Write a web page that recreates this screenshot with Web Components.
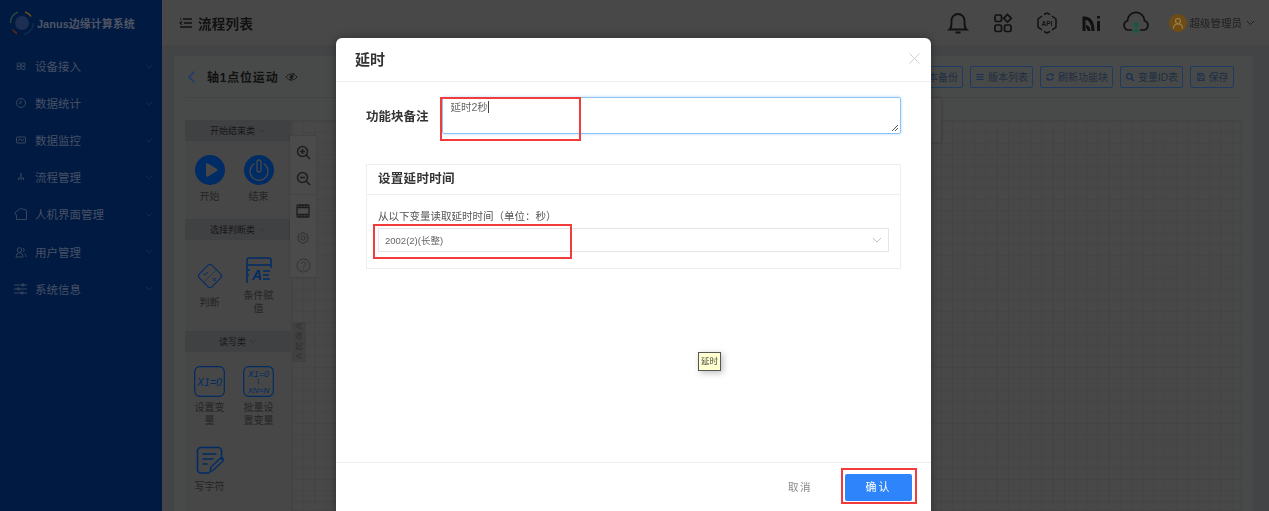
<!DOCTYPE html>
<html lang="zh">
<head>
<meta charset="utf-8">
<title>流程列表</title>
<style>
    html, body { margin: 0; height: 511px; overflow: hidden; background: #434445; }
    body { font-family: "Liberation Sans", "Noto Sans CJK SC", sans-serif; position: relative; }
    app-shell { filter: blur(.4px); }
</style>
</head>
<body>
<app-shell>
    <app-sidebar slot="side">
        <nav-item icon="device">设备接入</nav-item>
        <nav-item icon="clock">数据统计</nav-item>
        <nav-item icon="monitor">数据监控</nav-item>
        <nav-item icon="flow">流程管理</nav-item>
        <nav-item icon="home">人机界面管理</nav-item>
        <nav-item icon="user">用户管理</nav-item>
        <nav-item icon="sliders">系统信息</nav-item>
    </app-sidebar>
    <app-header slot="top"></app-header>
    <flow-page slot="main">
        <tool-button icon="none">本备份</tool-button>
        <tool-button icon="list">版本列表</tool-button>
        <tool-button icon="refresh">刷新功能块</tool-button>
        <tool-button icon="search">变量ID表</tool-button>
        <tool-button icon="save" style="min-width:44px">保存</tool-button>
    </flow-page>
</app-shell>
<delay-dialog></delay-dialog>
<script>
const ICONS = {
    device: '<rect x="3" y="4" width="3.5" height="3" rx="1"/><rect x="7.5" y="4" width="3.5" height="3" rx="1"/><rect x="3" y="7.5" width="3.5" height="3" rx="1"/><rect x="7.5" y="7.5" width="3.5" height="3" rx="1"/>',
    clock: '<circle cx="7" cy="7" r="4.500"/><path d="M7 4.500v2.700h-2"/>',
    monitor: '<rect x="2.500" y="4" width="9" height="6" rx=".5"/><path d="M4 7.500l2-1.500 2 1.500 2-1"/>',
    flow: '<path d="M7 4.500v3M4.500 10V8h5v2M7 8v2"/><circle cx="7" cy="4" r=".5"/>',
    home: '<path d="M1 5.500L6.500 1.500l6 1.500v9.500H2.500V8L1 7z"/>',
    user: '<circle cx="5.500" cy="5" r="2.300"/><path d="M2 12c0-3 1.500-4 3.500-4s3.500 1 3.500 4zM9 3a2.300 2.300 0 0 1 0 4M10.500 8.500c1 .7 1.500 2 1.500 3.500"/>',
    sliders: '<path d="M0 3h13M0 7h13M0 11h13"/><circle cx="9" cy="3" r="1.200"/><circle cx="4.500" cy="7" r="1.200"/><circle cx="8" cy="11" r="1.200"/>',
    list: '<path d="M2 3.500h10M2 7h10M2 10.500h10" stroke-width="1.600"/>',
    refresh: '<path d="M2.500 6a4.700 4.700 0 0 1 8.300-1.500M11.500 8a4.700 4.700 0 0 1-8.300 1.500" stroke-width="1.500"/><path d="M11.500 2v3h-3M2.500 12V9h3" stroke-width="1.200"/>',
    search: '<circle cx="6" cy="6" r="3.800" stroke-width="1.600"/><path d="M9 9l3.500 3.500" stroke-width="1.800"/>',
    save: '<path d="M2.500 2h7l2 2v8h-9zM4.500 2v3h4V2M4.500 12V8.500h5V12" stroke-width="1.200"/>',
    none: ''
};

class AppShell extends HTMLElement {
    constructor() {
        super();
        this.attachShadow({ mode: 'open' });
    }

    connectedCallback() {
        this.shadowRoot.innerHTML = `
            <style>
                :host {
                    display: grid;
                    grid-template-columns: 162px 1fr;
                    grid-template-rows: 45px 466px;
                    width: 1269px;
                    height: 511px;
                    overflow: hidden;
                }
                .side { grid-row: 1 / 3; display: flex; }
                .main { display: flex; min-width: 0; padding: 11px 16px 0 12px; }
            </style>
            <div class="side"><slot name="side"></slot></div>
            <slot name="top"></slot>
            <div class="main"><slot name="main"></slot></div>
        `;
    }
}

class AppSidebar extends HTMLElement {
    constructor() {
        super();
        this.attachShadow({ mode: 'open' });
    }

    connectedCallback() {
        this.shadowRoot.innerHTML = `
            <style>
                :host {
                    display: block;
                    width: 162px;
                    background: #001a42;
                }
                .logo {
                    display: flex;
                    align-items: center;
                    gap: 2px;
                    height: 45px;
                    padding-left: 9px;
                    box-sizing: border-box;
                    color: #4f5563;
                    font-size: 11px;
                    font-weight: bold;
                    white-space: nowrap;
                }
                nav { padding-top: 2.500px; }
            </style>
            <div class="logo">
                <svg width="26" height="26" viewBox="0 0 26 26" fill="none" stroke-width="1.500">
                    <circle cx="13" cy="13" r="7" fill="#1c2f52"/>
                    <path d="M1.500 13A11.500 11.500 0 0 1 9 2.200" stroke="#244a3e"/>
                    <path d="M16 2A11.500 11.500 0 0 1 22 6.500" stroke="#6a5019"/>
                    <path d="M3.500 19.500A11.500 11.500 0 0 0 8 23.500" stroke="#5e271c"/>
                    <path d="M15 24.300A11.500 11.500 0 0 0 24.500 13" stroke="#112c4c"/>
                </svg>
                <span>Janus边缘计算系统</span>
            </div>
            <nav><slot></slot></nav>
        `;
    }
}

class NavItem extends HTMLElement {
    constructor() {
        super();
        this.attachShadow({ mode: 'open' });
    }

    connectedCallback() {
        const icon = ICONS[this.getAttribute('icon')] || '';
        this.shadowRoot.innerHTML = `
            <style>
                :host {
                    display: flex;
                    align-items: center;
                    height: 37.100px;
                    padding-left: 14px;
                    color: #475165;
                    font-size: 11.500px;
                    white-space: nowrap;
                }
                svg.icon { flex: none; margin-right: 7px; stroke: #3d4a60; fill: none; stroke-width: .9; }
                .label { flex: 1; }
                svg.arrow { margin-right: 9px; stroke: #16294a; fill: none; }
            </style>
            <svg class="icon" width="14" height="14" viewBox="0 0 14 14">${icon}</svg>
            <span class="label"><slot></slot></span>
            <svg class="arrow" width="8" height="5" viewBox="0 0 8 5"><path d="M1 1l3 3 3-3"/></svg>
        `;
    }
}

class AppHeader extends HTMLElement {
    constructor() {
        super();
        this.attachShadow({ mode: 'open' });
    }

    connectedCallback() {
        this.shadowRoot.innerHTML = `
            <style>
                :host {
                    display: flex;
                    align-items: center;
                    height: 45px;
                    padding-left: 17px;
                    background: #484848;
                    color: #111;
                }
                .title { margin-left: 6px; font-size: 13.500px; font-weight: bold; flex: 1; letter-spacing: .3px; }
                svg { stroke: #111; fill: none; flex: none; }
                .icons { display: flex; align-items: center; gap: 20px; }
                .user { display: flex; align-items: center; margin: 0 14px 0 20px; color: #1f1f1f; font-size: 10.500px; }
                .avatar {
                    width: 18px;
                    height: 18px;
                    border-radius: 50%;
                    background: #704c15;
                    margin-right: 3px;
                    display: flex;
                    align-items: center;
                    justify-content: center;
                }
                .avatar svg { stroke: #9a8052; }
            </style>
            <svg width="13" height="10" viewBox="0 0 13 10" stroke-width="1.300"><path d="M4 1h9M5 5h8M1 9h12M1 1h1M3 3.500L1 5l2 1.500" /></svg>
            <span class="title">流程列表</span>
            <div class="icons">
                <svg width="26" height="26" viewBox="0 0 26 26" stroke-width="1.800"><path d="M4.500 19.500c2-1.500 2-3.500 2-9a6.500 6.500 0 0 1 13 0c0 5.500 0 7.500 2 9zM10.500 22.500h5"/></svg>
                <svg width="24" height="24" viewBox="0 0 24 24" stroke-width="1.700"><rect x="4" y="4" width="6.500" height="6.500" rx="1.500"/><path d="M16.500 3.500l3.800 3.800-3.800 3.800-3.800-3.800z"/><rect x="4" y="14" width="6.500" height="6.500" rx="1.500"/><rect x="13.500" y="14" width="6.500" height="6.500" rx="1.500"/></svg>
                <svg width="24" height="24" viewBox="0 0 24 24" stroke-width="1.500"><path d="M7 5L3 8v8l4 3M17 5l4 3v8l-4 3M9 3.500l3-1.500 3 1.500M9 20.500l3 1.500 3-1.500"/><text x="12" y="14.500" font-size="6.500" font-weight="bold" fill="#111" stroke="none" text-anchor="middle">API</text></svg>
                <svg width="24" height="24" viewBox="0 0 24 24" stroke-width="3"><path d="M5 20V7c6 0 9 5 9 13M10 20c0-2.500-1.500-4.500-3-4.500" /><path d="M19.500 10v10M19.500 5v2.500" /></svg>
                <svg width="26" height="24" viewBox="0 0 26 24" stroke-width="1.700"><path d="M9 19H6a4.700 4.700 0 0 1-1.500-9.200 8.500 8.500 0 0 1 17 0A4.700 4.700 0 0 1 20 19h-3"/><path d="M13 12v9.500M10.500 14.500L13 12l2.500 2.500M10.500 19L13 21.500l2.500-2.500" stroke="#155a47" stroke-width="1.800"/></svg>
            </div>
            <div class="user">
                <span class="avatar"><svg width="12" height="12" viewBox="0 0 12 12" stroke-width="1.100"><circle cx="6" cy="4" r="2.500"/><path d="M1.500 11.500c0-3 2-4.500 4.500-4.500s4.500 1.500 4.500 4.500"/></svg></span>
                超级管理员
                <svg style="margin-left:4px;stroke:#1f1f1f" width="9" height="6" viewBox="0 0 9 6"><path d="M1 1l3.500 3.500L8 1"/></svg>
            </div>
        `;
    }
}

class ToolButton extends HTMLElement {
    constructor() {
        super();
        this.attachShadow({ mode: 'open' });
    }

    connectedCallback() {
        const icon = ICONS[this.getAttribute('icon')] || '';
        this.shadowRoot.innerHTML = `
            <style>
                :host {
                    display: inline-flex;
                    align-items: center;
                    justify-content: center;
                    gap: 3px;
                    height: 22px;
                    padding: 0 4px;
                    box-sizing: border-box;
                    border: 1px solid #1f3a62;
                    border-radius: 2px;
                    color: #202e42;
                    font-size: 10px;
                    white-space: nowrap;
                }
                svg { stroke: #172f52; fill: none; flex: none; }
            </style>
            ${icon ? `<svg width="10" height="10" viewBox="0 0 14 14">${icon}</svg>` : ''}
            <slot></slot>
        `;
    }
}

class FlowPage extends HTMLElement {
    constructor() {
        super();
        this.attachShadow({ mode: 'open' });
    }

    connectedCallback() {
        this.shadowRoot.innerHTML = `
            <style>
                :host {
                    display: flex;
                    flex-direction: column;
                    flex: 1;
                    min-width: 0;
                    box-sizing: border-box;
                    padding: 0 11px;
                    background: #484949;
                    position: relative;
                }
                .head {
                    display: flex;
                    align-items: center;
                    height: 41px;
                    flex: none;
                    border-bottom: 1px solid #434444;
                    color: #111;
                    font-size: 12px;
                    font-weight: bold;
                    letter-spacing: .8px;
                }
                .head .back { stroke: #173a6e; fill: none; margin: 0 11px 0 2px; }
                .head .eye { stroke: #1a1a1a; fill: none; margin-left: 7px; }
                .actions { margin-left: auto; margin-right: 8px; display: flex; gap: 7px; font-weight: normal; letter-spacing: 0; }
                .spacer { height: 22px; flex: none; }
                .work { display: flex; flex: 1; min-height: 0; position: relative; }
                .canvas {
                    flex: 1;
                    border: 1px solid #434444;
                    background-color: #484848;
                    background-image:
                        linear-gradient(#444 1px, transparent 1px),
                        linear-gradient(90deg, #444 1px, transparent 1px);
                    background-size: 11.200px 11.200px;
                }
                .hover-panel {
                    position: absolute;
                    left: 700px;
                    top: 42px;
                    width: 67px;
                    height: 44px;
                    background: #4a4a4a;
                    box-shadow: 0 0 3px rgba(0,0,0,.25);
                }
                tool-strip { position: absolute; left: 105px; top: 16px; }
                .collapse {
                    position: absolute;
                    left: 107px;
                    top: 202px;
                    width: 14px;
                    height: 40px;
                    background: #414141;
                    color: #2f2f2f;
                    font-size: 8px;
                    line-height: 10px;
                    text-align: center;
                }
            </style>
            <div class="head">
                <svg class="back" width="9" height="14" viewBox="0 0 9 14" stroke-width="1.300"><path d="M7.500 1.500L2 7l5.500 5.500"/></svg>
                轴1点位运动
                <svg class="eye" width="13" height="10" viewBox="0 0 13 10" stroke-width="1"><path d="M1 5c3-4 8-4 11 0-3 4-8 4-11 0z"/><circle cx="6.500" cy="5" r="1.500" fill="#1a1a1a"/><path d="M9 1L5 9"/></svg>
                <div class="actions"><slot></slot></div>
            </div>
            <div class="spacer"></div>
            <div class="work">
                <palette-panel></palette-panel>
                <div class="canvas"></div>
                <tool-strip></tool-strip>
                <div class="collapse">≪<br>收<br>起<br>≪</div>
            </div>
            <div class="hover-panel"></div>
        `;
    }
}

class PaletteItem extends HTMLElement {
    constructor() {
        super();
        this.attachShadow({ mode: 'open' });
    }

    connectedCallback() {
        this.shadowRoot.innerHTML = `
            <style>
                :host {
                    display: flex;
                    flex-direction: column;
                    align-items: center;
                    align-self: center;
                    color: #252525;
                    font-size: 10px;
                    line-height: 13px;
                    text-align: center;
                }
                .icon { height: 30px; display: flex; align-items: center; margin-bottom: 5px; }
                .text { width: 32px; word-break: break-all; }
                ::slotted(svg) { display: block; }
            </style>
            <div class="icon"><slot name="icon"></slot></div>
            <div class="text"><slot></slot></div>
        `;
    }
}

class PaletteGroup extends HTMLElement {
    constructor() {
        super();
        this.attachShadow({ mode: 'open' });
    }

    connectedCallback() {
        this.shadowRoot.innerHTML = `
            <style>
                :host { display: block; }
                .title {
                    display: flex;
                    align-items: center;
                    justify-content: center;
                    gap: 3px;
                    height: 21px;
                    background: #404143;
                    color: #171717;
                    font-size: 9px;
                }
                .title svg { stroke: #363636; fill: none; }
                .items {
                    display: grid;
                    grid-template-columns: 49px 49px;
                    row-gap: 18px;
                    padding: 14px 0 16px 0;
                }
            </style>
            <div class="title">${this.getAttribute('title')}<svg width="8" height="5" viewBox="0 0 8 5"><path d="M1 1l3 3 3-3"/></svg></div>
            <div class="items"><slot></slot></div>
        `;
    }
}

class PalettePanel extends HTMLElement {
    constructor() {
        super();
        this.attachShadow({ mode: 'open' });
    }

    connectedCallback() {
        const blue = '#002c66';
        const panel = '#474747';
        const eq = 'font-family:Liberation Sans;font-style:italic;font-size:10.500px;fill:' + blue;
        this.shadowRoot.innerHTML = `
            <style>
                :host {
                    display: block;
                    width: 106px;
                    flex: none;
                    overflow: hidden;
                    background: ${panel};
                }
            </style>
            <palette-group title="开始结束类">
                <palette-item>
                    <svg slot="icon" width="30" height="30" viewBox="0 0 30 30"><circle cx="15" cy="15" r="15" fill="${blue}"/><path d="M11 9.500c0-1 1-1.500 2-1l9 5.500c.8.500.8 1.500 0 2l-9 5.500c-1 .500-2 0-2-1z" fill="${panel}"/></svg>
                    开始
                </palette-item>
                <palette-item>
                    <svg slot="icon" width="30" height="30" viewBox="0 0 30 30"><circle cx="15" cy="15" r="15" fill="${blue}"/><path d="M10.500 8.500a9 9 0 1 0 9 0" fill="none" stroke="${panel}" stroke-width="1.300"/><rect x="13" y="5" width="4" height="12" rx="2" fill="none" stroke="${panel}" stroke-width="1.300"/></svg>
                    结束
                </palette-item>
            </palette-group>
            <palette-group title="选择判断类">
                <palette-item>
                    <svg slot="icon" width="30" height="30" viewBox="0 0 30 30" fill="none" stroke="${blue}"><rect x="6" y="6" width="18" height="18" rx="3" transform="rotate(45 15 15)"/><path d="M8.500 12.500l1.500 1.500 3-3"/><path d="M18 17l3 3M21 17l-3 3"/><path d="M9 21L21 9" stroke-width=".5"/></svg>
                    判断
                </palette-item>
                <palette-item>
                    <svg slot="icon" width="27" height="27" viewBox="0 0 27 27" fill="none" stroke="${blue}" stroke-width="1.500"><path d="M3 26H2V4a2 2 0 0 1 2-2h20a2 2 0 0 1 2 2v5H2M26 9v3"/><text x="7" y="24" style="font-family:Liberation Sans;font-style:italic;font-weight:bold;font-size:14px;fill:${blue};stroke:none">A</text><path d="M18 15h7M18 19h6M18 23h7"/><path d="M2 14h3M2 19h2"/></svg>
                    条件赋值
                </palette-item>
            </palette-group>
            <palette-group title="读写类">
                <palette-item>
                    <svg slot="icon" width="31" height="31" viewBox="0 0 31 31" fill="none" stroke="${blue}" stroke-width="1.200"><rect x=".7" y=".7" width="29.600" height="29.600" rx="5"/><text x="15.500" y="19.500" text-anchor="middle" style="${eq};stroke:none">X1=0</text></svg>
                    设置变量
                </palette-item>
                <palette-item>
                    <svg slot="icon" width="31" height="31" viewBox="0 0 31 31" fill="none" stroke="${blue}" stroke-width="1.200"><rect x=".7" y=".7" width="29.600" height="29.600" rx="5"/><text x="15.500" y="11" text-anchor="middle" style="${eq};font-size:9px;stroke:none">X1=0</text><path d="M15.500 13v5" stroke-dasharray="1.200 1"/><text x="15.500" y="27" text-anchor="middle" style="${eq};font-size:8px;stroke:none">XN=N</text></svg>
                    批量设置变量
                </palette-item>
                <palette-item>
                    <svg slot="icon" width="28" height="28" viewBox="0 0 28 28" fill="none" stroke="${blue}" stroke-width="1.600"><path d="M13 27H5a3.500 3.500 0 0 1-3.500-3.500V5A3.500 3.500 0 0 1 5 1.500h17A3.500 3.500 0 0 1 25.500 5v9"/><path d="M6.500 8h14M6.500 13h11M6.500 18h5"/><path d="M14 26l1-5 9-8.500c1-1 2.500-1 3 0s.500 2 -.5 3l-9 8.500z" stroke-width="1.400"/></svg>
                    写字符
                </palette-item>
            </palette-group>
        `;
    }
}

class ToolStrip extends HTMLElement {
    constructor() {
        super();
        this.attachShadow({ mode: 'open' });
    }

    connectedCallback() {
        this.shadowRoot.innerHTML = `
            <style>
                :host {
                    display: flex;
                    flex-direction: column;
                    align-items: center;
                    gap: 11px;
                    width: 26px;
                    padding: 9px 0 3px;
                    box-sizing: border-box;
                    height: 141px;
                    background: #4b4b4b;
                    box-shadow: 0 0 2px rgba(0,0,0,.2);
                }
                svg { stroke: #1d1d1d; fill: none; flex: none; display: block; }
                hr { width: 100%; margin: -3px 0 -2.500px; border: 0; border-top: 1px solid #444; }
                .tall { margin-bottom: 2px; }
            </style>
            <svg width="15" height="15" viewBox="0 0 15 15" stroke-width="1.500"><circle cx="6.500" cy="6.500" r="5"/><path d="M10 10l4 4M4 6.500h5M6.500 4v5"/></svg>
            <svg width="15" height="15" viewBox="0 0 15 15" stroke-width="1.500"><circle cx="6.500" cy="6.500" r="5"/><path d="M10 10l4 4M4 6.500h5"/></svg>
            <hr>
            <svg class="tall" width="14" height="14" viewBox="0 0 14 14" stroke-width="1.300"><rect x="1" y="1" width="12" height="12" rx="1"/><path d="M1 3.500h12M1 10.500h12M4 1v2.500M7 1v2.500M10 1v2.500M4 10.500V13M7 10.500V13M10 10.500V13"/></svg>
            <svg class="tall" width="14" height="14" viewBox="0 0 14 14" style="stroke:#2f2f2f" stroke-width="1"><path d="M7 1.500l4.800 2.700v5.600L7 12.500 2.200 9.800V4.200z"/><circle cx="7" cy="7" r="2.200"/></svg>
            <svg width="15" height="15" viewBox="0 0 15 15" style="stroke:#333" stroke-width="1"><circle cx="7.500" cy="7.500" r="6.500"/><path d="M5.500 6a2 2 0 1 1 3 1.700c-.7.400-1 .8-1 1.500M7.500 10.500v1.200"/></svg>
        `;
    }
}

class DelayDialog extends HTMLElement {
    constructor() {
        super();
        this.attachShadow({ mode: 'open' });
    }

    connectedCallback() {
        this.shadowRoot.innerHTML = `
            <style>
                :host {
                    position: absolute;
                    left: 336px;
                    top: 38px;
                    width: 595px;
                    height: 480px;
                    display: flex;
                    flex-direction: column;
                    background: #fff;
                    border-radius: 6px;
                    box-shadow: 0 0 8px rgba(0,0,0,.35);
                    color: #333;
                    filter: blur(.25px);
                }
                header {
                    display: flex;
                    align-items: center;
                    justify-content: space-between;
                    box-sizing: border-box;
                    height: 44px;
                    padding: 0 11px 2px 19px;
                    border-bottom: 1px solid #eceef1;
                    font-size: 15px;
                    font-weight: bold;
                }
                header svg { stroke: #cfcfcf; fill: none; }
                .body { flex: 1; padding: 15px 30px 0; display: flex; flex-direction: column; }
                .note { display: flex; align-items: center; gap: 13px; }
                .note label { font-size: 12.500px; font-weight: bold; margin-top: -1px; white-space: nowrap; }
                .area {
                    flex: 1;
                    height: 37px;
                    box-sizing: border-box;
                    border: 1px solid #8cc5f5;
                    border-radius: 2px;
                    box-shadow: 0 0 3px rgba(64,158,255,.45);
                    padding: 3px 8px;
                    color: #666;
                    font-size: 10.500px;
                    line-height: 13px;
                    position: relative;
                }
                .caret { display: inline-block; width: 1px; height: 12px; background: #444; vertical-align: -2px; }
                .area svg { position: absolute; right: 1px; bottom: 1px; stroke: #555; fill: none; }
                .card {
                    margin-top: 30px;
                    height: 105px;
                    box-sizing: border-box;
                    border: 1px solid #eceef2;
                    display: flex;
                    flex-direction: column;
                }
                .card h3 {
                    margin: 0;
                    height: 30px;
                    flex: none;
                    padding: 0 0 4px 11px;
                    display: flex;
                    align-items: center;
                    box-sizing: border-box;
                    border-bottom: 1px solid #eceef2;
                    font-size: 12.500px;
                    letter-spacing: .3px;
                }
                .card .row { padding: 15px 11px 0; }
                .card p { margin: 0 0 5px; font-size: 10.500px; line-height: 13px; color: #555; }
                .select {
                    height: 24px;
                    box-sizing: border-box;
                    border: 1px solid #e4e6e9;
                    padding: 0 6px;
                    display: flex;
                    align-items: center;
                    justify-content: space-between;
                    color: #666;
                    font-size: 9.500px;
                }
                .select svg { stroke: #c4c4c4; fill: none; }
                footer {
                    height: 49px;
                    margin-bottom: 7px;
                    box-sizing: border-box;
                    border-top: 1px solid #eceef1;
                    display: flex;
                    align-items: flex-start;
                    justify-content: flex-end;
                    gap: 33px;
                    padding: 11px 19px 0 0;
                    font-size: 10.500px;
                }
                .cancel { color: #888; letter-spacing: 1.500px; line-height: 27px; }
                .ok {
                    width: 67px;
                    height: 27px;
                    background: #2d84fb;
                    color: #fff;
                    border-radius: 2px;
                    text-align: center;
                    line-height: 27px;
                    letter-spacing: 2px;
                    font-size: 11px;
                }
                .mark { position: absolute; box-sizing: border-box; border: 2px solid #f23c3c; pointer-events: none; }
                .tip {
                    position: absolute;
                    left: 362px;
                    top: 314px;
                    width: 23px;
                    height: 19px;
                    box-sizing: border-box;
                    background: #ffffcf;
                    border: 1px solid #555;
                    box-shadow: 2px 2px 6px rgba(0,0,0,.25);
                    color: #444;
                    font-size: 8.500px;
                    line-height: 17px;
                    text-align: center;
                }
            </style>
            <header>
                <span>延时</span>
                <svg width="11" height="11" viewBox="0 0 11 11"><path d="M.5.5l10 10M10.500.5l-10 10"/></svg>
            </header>
            <div class="body">
                <div class="note">
                    <label>功能块备注</label>
                    <div class="area">延时2秒<span class="caret"></span>
                        <svg width="8" height="8" viewBox="0 0 8 8"><path d="M1 7l6-6M4 7l3-3"/></svg>
                    </div>
                </div>
                <div class="card">
                    <h3>设置延时时间</h3>
                    <div class="row">
                        <p>从以下变量读取延时时间（单位：秒）</p>
                        <div class="select">2002(2)(长整)
                            <svg width="10" height="6" viewBox="0 0 10 6"><path d="M1 1l4 4 4-4"/></svg>
                        </div>
                    </div>
                </div>
            </div>
            <footer>
                <span class="cancel">取消</span>
                <span class="ok">确认</span>
            </footer>
            <div class="tip">延时</div>
            <div class="mark" style="left:104px;top:59px;width:141px;height:44px"></div>
            <div class="mark" style="left:37px;top:186px;width:199px;height:35px"></div>
            <div class="mark" style="left:505px;top:430px;width:76px;height:36px"></div>
        `;
    }
}

customElements.define('app-shell', AppShell);
customElements.define('app-sidebar', AppSidebar);
customElements.define('nav-item', NavItem);
customElements.define('app-header', AppHeader);
customElements.define('tool-button', ToolButton);
customElements.define('flow-page', FlowPage);
customElements.define('palette-item', PaletteItem);
customElements.define('palette-group', PaletteGroup);
customElements.define('palette-panel', PalettePanel);
customElements.define('tool-strip', ToolStrip);
customElements.define('delay-dialog', DelayDialog);
</script>
</body>
</html>
